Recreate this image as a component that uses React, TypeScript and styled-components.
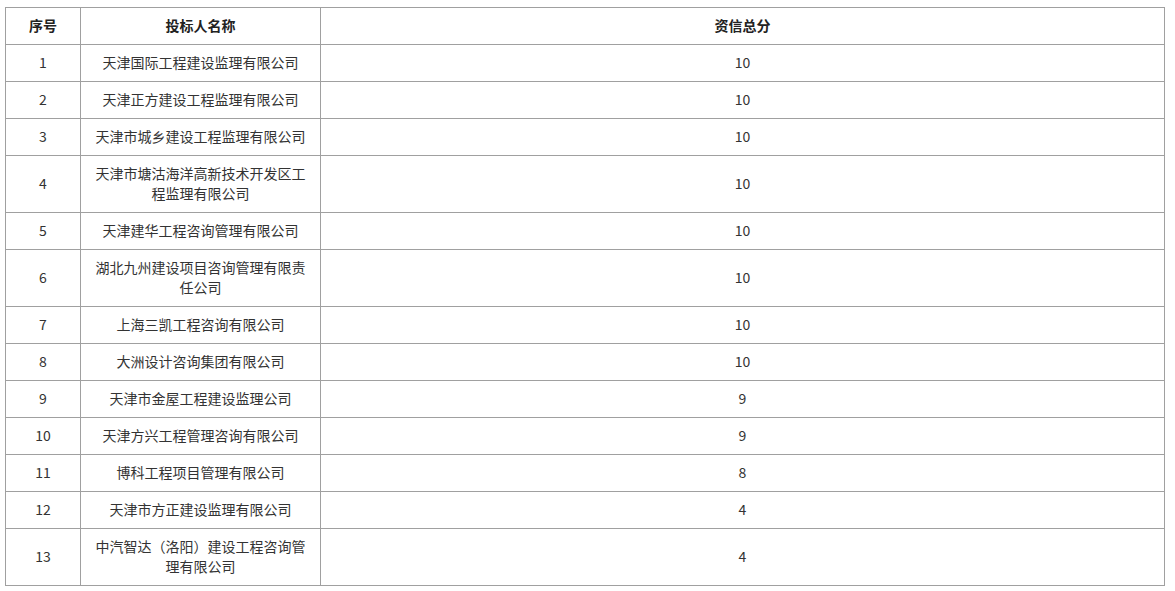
import React from "react";
import styled, { createGlobalStyle } from "styled-components";

const Global = createGlobalStyle`
  html, body { margin: 0; padding: 0; background: #fff; }
  body { font-family: "Noto Sans CJK SC", "Noto Sans", sans-serif; }
`;

const Page = styled.div`
  padding: 7px 5px;
`;

const Table = styled.table`
  border-collapse: collapse;
  width: 1160px;
  table-layout: fixed;
  font-size: 14px;
  color: #333;
`;

const Cell = styled.td<{ $head?: boolean }>`
  border: 1px solid #a0a0a0;
  padding: 7px 10px 9px;
  line-height: 20px;
  text-align: center;
  vertical-align: middle;
  font-weight: ${(p) => (p.$head ? 700 : 400)};
  color: ${(p) => (p.$head ? "#222" : "#333")};
  word-break: break-all;
`;

const rows: [string, string, string][] = [
  ["1", "天津国际工程建设监理有限公司", "10"],
  ["2", "天津正方建设工程监理有限公司", "10"],
  ["3", "天津市城乡建设工程监理有限公司", "10"],
  ["4", "天津市塘沽海洋高新技术开发区工程监理有限公司", "10"],
  ["5", "天津建华工程咨询管理有限公司", "10"],
  ["6", "湖北九州建设项目咨询管理有限责任公司", "10"],
  ["7", "上海三凯工程咨询有限公司", "10"],
  ["8", "大洲设计咨询集团有限公司", "10"],
  ["9", "天津市金屋工程建设监理公司", "9"],
  ["10", "天津方兴工程管理咨询有限公司", "9"],
  ["11", "博科工程项目管理有限公司", "8"],
  ["12", "天津市方正建设监理有限公司", "4"],
  ["13", "中汽智达（洛阳）建设工程咨询管理有限公司", "4"],
];

export default function App() {
  return (
    <>
      <Global />
      <Page>
        <Table>
          <colgroup>
            <col style={{ width: 75 }} />
            <col style={{ width: 240 }} />
            <col />
          </colgroup>
          <thead>
            <tr>
              <Cell as="th" $head>序号</Cell>
              <Cell as="th" $head>投标人名称</Cell>
              <Cell as="th" $head>资信总分</Cell>
            </tr>
          </thead>
          <tbody>
            {rows.map((r) => (
              <tr key={r[0]}>
                <Cell>{r[0]}</Cell>
                <Cell>{r[1]}</Cell>
                <Cell>{r[2]}</Cell>
              </tr>
            ))}
          </tbody>
        </Table>
      </Page>
    </>
  );
}
